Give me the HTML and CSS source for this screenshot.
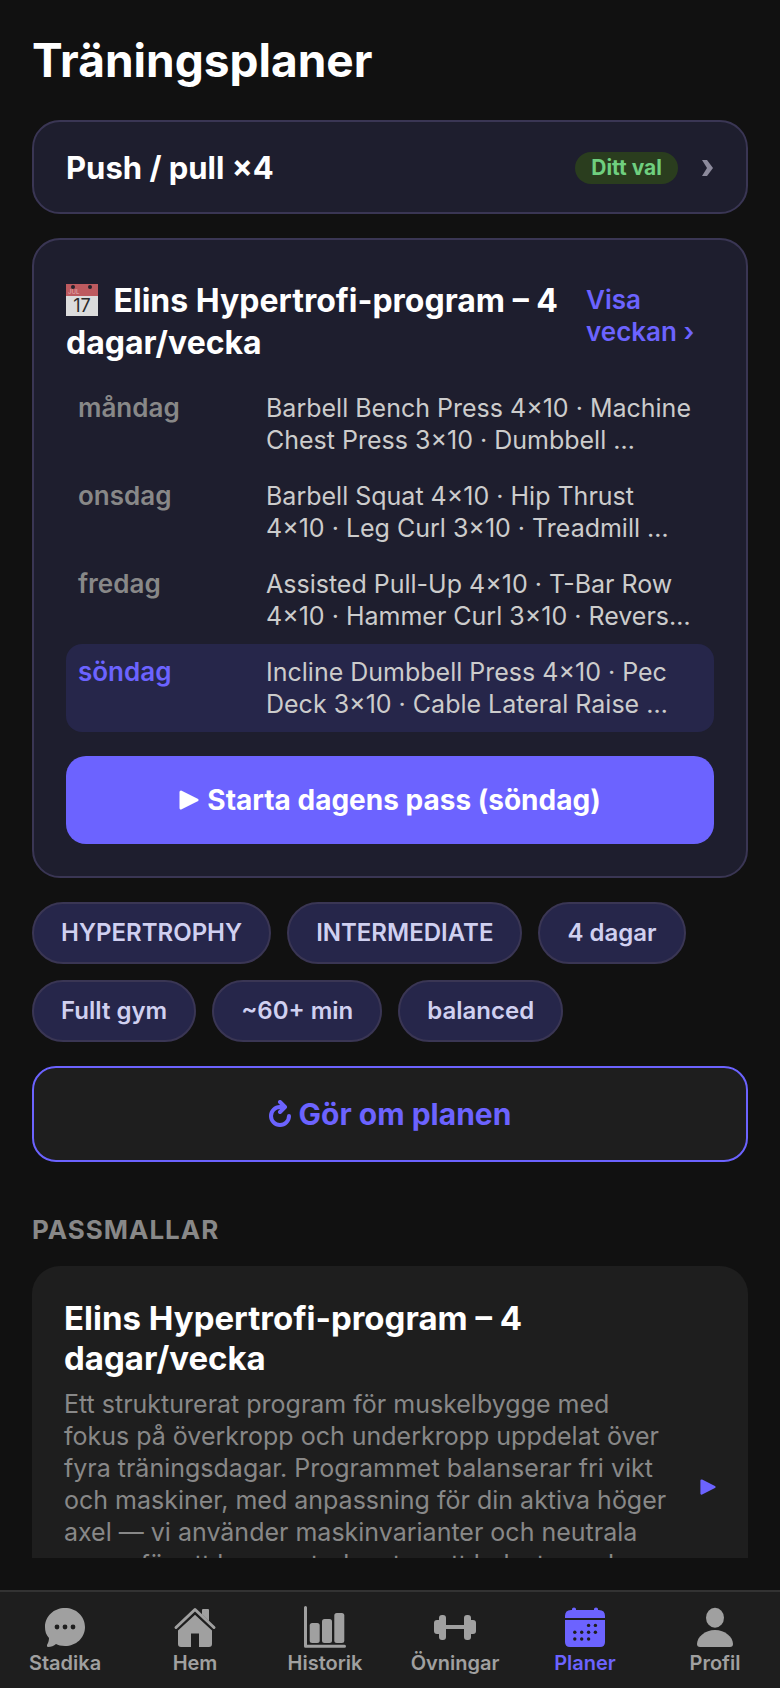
FILE: index.html
```html
<!DOCTYPE html>
<html lang="sv">
<head>
  <meta charset="UTF-8">
  <meta name="viewport" content="width=device-width, initial-scale=1">
  <title>Träningsplaner</title>
  <link rel="stylesheet" href="styles.css">
</head>
<body>
  <main class="content">
    <h1>Träningsplaner</h1>

    <button type="button" class="card split-card">
      <span class="split-name">Push / pull ×4</span>
      <span class="badge">Ditt val</span>
      <svg class="chevron" viewBox="0 0 12 18" aria-hidden="true"><path d="M0 1h5l6 8-6 8H0l5-8z"/></svg>
    </button>

    <section class="card week-card">
      <div class="week-head">
        <h2>
          <svg class="cal-emoji" viewBox="0 0 32 32" aria-hidden="true">
            <rect width="32" height="32" fill="#dcdcdc"/>
            <rect width="32" height="12" fill="#bd5a5f"/>
            <circle cx="7" cy="3" r="2" fill="#26222c"/>
            <circle cx="24" cy="3" r="2" fill="#26222c"/>
            <text x="2" y="10" font-size="6" fill="#e6b4b6">JUL</text>
            <text x="16" y="28" font-size="18" text-anchor="middle" fill="#2b2b2b">17</text>
          </svg>
          Elins Hypertrofi-program – 4 dagar/vecka
        </h2>
        <a href="#vecka" class="week-link">Visa veckan ›</a>
      </div>

      <ul class="days">
        <li class="day">
          <span class="day-name">måndag</span>
          <span class="day-text">Barbell Bench Press 4×10&nbsp;· Machine Chest Press 3×10&nbsp;· Dumbbell …</span>
        </li>
        <li class="day">
          <span class="day-name">onsdag</span>
          <span class="day-text">Barbell Squat 4×10&nbsp;· Hip Thrust 4×10&nbsp;· Leg Curl 3×10&nbsp;· Treadmill …</span>
        </li>
        <li class="day">
          <span class="day-name">fredag</span>
          <span class="day-text">Assisted Pull-Up 4×10&nbsp;· T-Bar Row 4×10&nbsp;· Hammer Curl 3×10&nbsp;· Revers…</span>
        </li>
        <li class="day today">
          <span class="day-name">söndag</span>
          <span class="day-text">Incline Dumbbell Press 4×10&nbsp;· Pec Deck 3×10&nbsp;· Cable Lateral Raise …</span>
        </li>
      </ul>

      <button type="button" class="start-btn">
        <svg class="play" viewBox="0 0 20 20" aria-hidden="true"><path d="M2 2l16 8-16 8z"/></svg>
        Starta dagens pass (söndag)
      </button>
    </section>

    <div class="chips">
      <span class="chip">HYPERTROPHY</span>
      <span class="chip">INTERMEDIATE</span>
      <span class="chip">4 dagar</span>
      <span class="chip">Fullt gym</span>
      <span class="chip">~60+ min</span>
      <span class="chip">balanced</span>
    </div>

    <button type="button" class="redo-btn">
      <svg class="redo" viewBox="0 0 22 28" aria-hidden="true">
        <path d="M20 16a9 9 0 1 1-9-9h4"/>
        <path d="M11 2l5 5-5 5"/>
      </svg>
      Gör om planen
    </button>

    <h3>PASSMALLAR</h3>

    <a href="#mall" class="template">
      <span class="template-body">
        <span class="template-name">Elins Hypertrofi-program – 4 dagar/vecka</span>
        <span class="template-text">Ett strukturerat program för muskelbygge med fokus på överkropp och underkropp uppdelat över fyra träningsdagar. Programmet balanserar fri vikt och maskiner, med anpassning för din aktiva höger axel — vi använder maskinvarianter och neutrala grepp för att bygga styrka utan att belasta axeln. Varje pass tar drygt en timme och avslutas med lätt kondition. Öka vikten när du klarar alla repetitioner med god teknik i samtliga set.</span>
      </span>
      <svg class="play" viewBox="0 0 20 20" aria-hidden="true"><path d="M2 2l16 8-16 8z"/></svg>
    </a>
  </main>

  <nav class="tabs">
    <a href="#stadika" class="tab">
      <svg viewBox="0 0 44 44" aria-hidden="true">
        <path d="M22 3c11 0 20 8 20 19s-9 19-20 19c-4 0-7-1-9-2-2 2-5 3-8 3-1 0-1-1-1-2 1-2 2-4 2-7-3-3-4-7-4-11C2 11 11 3 22 3z"/>
        <g class="cut"><circle cx="14" cy="22" r="2.400"/><circle cx="22" cy="22" r="2.400"/><circle cx="30" cy="22" r="2.400"/></g>
      </svg>
      Stadika
    </a>
    <a href="#hem" class="tab">
      <svg viewBox="0 0 44 44" aria-hidden="true">
        <path d="M5 22L22 7l17 15v17q0 3-3 3h-10V28.500h-8V42H8q-3 0-3-3z"/>
        <path d="M29 12V5q0-1 1-1h5q1 0 1 1v14z"/>
        <path class="gap" d="M3 24L22 6.500l19 17.500"/>
        <path class="roof" d="M3 22.500L22 4.500l19 18"/>
      </svg>
      Hem
    </a>
    <a href="#historik" class="tab">
      <svg viewBox="0 0 44 44" aria-hidden="true">
        <path class="axis" d="M2.500 2.500v38.700h39"/>
        <rect x="6.700" y="18" width="10" height="20" rx="2.500"/>
        <rect x="19" y="14" width="10" height="24" rx="2.500"/>
        <rect x="31.300" y="8" width="10" height="30" rx="2.500"/>
      </svg>
      Historik
    </a>
    <a href="#ovningar" class="tab">
      <svg viewBox="0 0 44 44" aria-hidden="true">
        <rect x="1" y="15" width="8" height="14" rx="3"/>
        <rect x="6" y="10" width="7" height="25" rx="3"/>
        <rect x="12" y="20" width="20" height="4"/>
        <rect x="31" y="10" width="7" height="25" rx="3"/>
        <rect x="35" y="15" width="8" height="14" rx="3"/>
      </svg>
      Övningar
    </a>
    <a href="#planer" class="tab active">
      <svg viewBox="0 0 44 44" aria-hidden="true">
        <path d="M2 13v-2q0-6 6-6h1V4q0-1.500 2-1.500T13 4v1h18V4q0-1.500 2-1.500T35 4v1h1q6 0 6 6v2z"/>
        <path d="M2 15h40v22q0 5-5 5H7q-5 0-5-5z"/>
        <g class="cut">
          <circle cx="25.600" cy="20.400" r="1.700"/><circle cx="32.400" cy="20.400" r="1.700"/>
          <circle cx="11.800" cy="27.200" r="1.700"/><circle cx="18.700" cy="27.200" r="1.700"/><circle cx="25.600" cy="27.200" r="1.700"/><circle cx="32.400" cy="27.200" r="1.700"/>
          <circle cx="11.800" cy="34" r="1.700"/><circle cx="18.700" cy="34" r="1.700"/><circle cx="25.600" cy="34" r="1.700"/>
        </g>
      </svg>
      Planer
    </a>
    <a href="#profil" class="tab">
      <svg viewBox="0 0 44 44" aria-hidden="true">
        <ellipse cx="22" cy="12.700" rx="9" ry="10"/>
        <path d="M22 25c10 0 18 7 18 14q0 3-3 3H7q-3 0-3-3c0-7 8-14 18-14z"/>
      </svg>
      Profil
    </a>
  </nav>
</body>
</html>
```
FILE: styles.css
```css
* { box-sizing: border-box; }
body { margin: 0; height: 100vh; display: flex; flex-direction: column; background: #111; color: #fff; font-family: Inter, "Liberation Sans", sans-serif; font-size: 25px; line-height: 32px; }
button { font-family: inherit; line-height: inherit; cursor: pointer; }
a { text-decoration: none; }
h1, h2, h3 { margin: 0; }

.content { flex: 1; min-height: 0; overflow: hidden; padding: 30px 32px 0; margin-bottom: 32px; }
h1 { font-size: 46px; line-height: 60px; margin-bottom: 30px; }
.card { width: 100%; background: #1e1e2e; border: 2px solid #3a3654; border-radius: 28px; padding: 32px; margin-bottom: 24px; }

/* Vald split */
.split-card { display: flex; align-items: center; padding: 30px 32px 28px; color: #fff; text-align: left; }
.split-name { flex: 1; font-size: 31px; font-weight: 700; }
.badge { background: #2a3d1e; color: #6fcf7f; font-size: 21px; font-weight: 700; padding: 0 16px; border-radius: 16px; margin-right: 24px; }
.chevron { width: 12px; height: 18px; fill: #8c8a9c; }

/* Veckoplan */
.week-head { display: flex; align-items: flex-start; gap: 24px; padding-top: 8px; margin-bottom: 16px; }
.week-head h2 { flex: 1; font-size: 32px; line-height: 42px; }
.cal-emoji { width: 32px; height: 32px; margin-right: 8px; vertical-align: -4px; font-weight: 400; }
.week-link { width: 128px; padding-top: 4px; color: #6c63ff; font-size: 26px; font-weight: 600; }
.days { list-style: none; margin: 0 0 24px; padding: 0; }
.day { display: flex; padding: 12px; border-radius: 16px; }
.day-name { width: 188px; flex: none; color: #888; font-size: 26px; font-weight: 600; }
.day-text { color: #ccc; }
.today { background: #26264a; }
.today .day-name { color: #6c63ff; }
.play { width: 20px; height: 20px; flex: none; fill: currentColor; stroke: currentColor; stroke-width: 3; stroke-linejoin: round; }
.start-btn { display: flex; align-items: center; justify-content: center; gap: 8px; width: 100%; height: 88px; border: none; border-radius: 20px; background: #6c63ff; color: #fff; font-size: 28px; font-weight: 700; }

.chips { display: flex; flex-wrap: wrap; gap: 16px; margin-bottom: 24px; }
.chip { padding: 13px 27px; background: #26264a; border: 2px solid #3a3654; border-radius: 32px; color: #d0d0f0; font-size: 24px; font-weight: 600; }

.redo-btn { display: flex; align-items: center; justify-content: center; gap: 8px; width: 100%; height: 96px; background: #1e1e1e; border: 2px solid #6c63ff; border-radius: 24px; color: #6c63ff; font-size: 30px; font-weight: 700; }
.redo { width: 22px; height: 28px; fill: none; stroke: currentColor; stroke-width: 4; stroke-linecap: round; stroke-linejoin: round; }

/* Passmallar */
h3 { margin: 52px 0 20px; color: #888; font-size: 26px; line-height: 32px; letter-spacing: 1px; }
.template { display: flex; align-items: center; gap: 20px; padding: 32px; background: #1e1e1e; border-radius: 28px; color: #6c63ff; }
.template-body { flex: 1; }
.template-name { display: block; color: #fff; font-size: 33px; line-height: 40px; font-weight: 700; margin-bottom: 10px; }
.template-text { display: block; color: #888; }
.template .play { width: 16px; height: 16px; }

/* Flikar */
.tabs { display: flex; height: 98px; padding-top: 13px; background: #1e1e1e; border-top: 2px solid #333; }
.tab { flex: 1; display: flex; flex-direction: column; align-items: center; color: #a0a0a0; font-size: 20px; line-height: 28px; font-weight: 600; }
.tab svg { width: 44px; height: 44px; fill: currentColor; }
.tab.active { color: #6c63ff; }
.tab .cut { fill: #1e1e1e; }
.tab .gap { fill: none; stroke: #1e1e1e; stroke-width: 5; }
.tab .roof, .tab .axis { fill: none; stroke: currentColor; stroke-width: 3; stroke-linecap: round; stroke-linejoin: round; }
```
